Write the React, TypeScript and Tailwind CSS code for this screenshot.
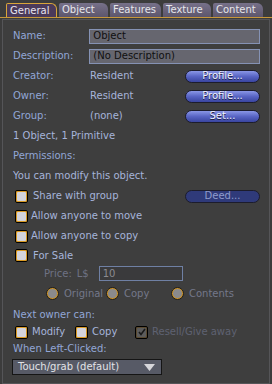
import React from "react";

const font = { fontFamily: '"DejaVu Sans", "Liberation Sans", sans-serif' };

function Tab({ label, active, w }: { label: string; active?: boolean; w: string }) {
  return (
    <div
      className={`${w} h-[14px] flex items-center pl-[3px] text-[10px] leading-none rounded-tr-[6px] rounded-tl-[2px] ${
        active
          ? "bg-[#4b3a5a] border-t border-l border-r border-[#d9a53a] text-[#e8e4ee]"
          : "bg-gradient-to-b from-[#77718a] to-[#5d566c] text-[#e6e6ea]"
      }`}
    >
      {label}
    </div>
  );
}

function Btn({ label, dark }: { label: string; dark?: boolean }) {
  return (
    <div
      className={`w-[75px] h-[13px] rounded-full border border-[#1c1c2c] flex items-center justify-center text-[10px] leading-none ${
        dark
          ? "bg-[#2f3a7a] text-[#8e9acc]"
          : "bg-gradient-to-b from-[#8a96e6] via-[#5864c4] to-[#3a45a0] text-[#eef0ff] [text-shadow:0_1px_0_#202040]"
      }`}
    >
      {label}
    </div>
  );
}

function Check({ checked, dim }: { checked?: boolean; dim?: boolean }) {
  return (
    <div
      className={`w-[13px] h-[13px] rounded-[2px] border border-black flex items-center justify-center shrink-0 ${
        dim ? "bg-[#5a4a30]" : "bg-[#d99a24]"
      }`}
    >
      <div
        className={`w-[9px] h-[9px] rounded-[1px] flex items-center justify-center ${
          dim ? "bg-[#5c5c5c]" : "bg-[#d4d4dc]"
        }`}
      >
        {checked && (
          <svg width="8" height="8" viewBox="0 0 8 8">
            <path d="M1 4 L3 6.5 L7 1" stroke="#1a1a1a" strokeWidth="1.6" fill="none" />
          </svg>
        )}
      </div>
    </div>
  );
}

function Radio() {
  return (
    <div className="w-[13px] h-[13px] rounded-full bg-[#c9922a] border border-[#1c1c1c] flex items-center justify-center shrink-0">
      <div className="w-[9px] h-[9px] rounded-full bg-[#8a8a8c]" />
    </div>
  );
}

const label = "text-[#92a6d6]";
const value = "text-[#a6b4da]";

export default function App() {
  return (
    <div className="w-[272px] h-[384px] bg-[#3c3c3c] flex flex-col text-[10px] leading-none" style={font}>
      {/* Tabs */}
      <div className="h-[18px] pt-[3px] pl-[6px] flex gap-[2px] border-b border-[#c8983a]">
        <Tab label="General" active w="w-[51px]" />
        <Tab label="Object" w="w-[49px]" />
        <Tab label="Features" w="w-[51px]" />
        <Tab label="Texture" w="w-[48px]" />
        <Tab label="Content" w="w-[50px]" />
      </div>

      {/* Panel */}
      <div className="flex-1 mx-[2px] mt-[1px] border border-[#555558] bg-[#3e3e3e] pl-[10px] pr-[9px] pt-[6px] flex flex-col">
        <div className="h-[20px] flex items-center">
          <span className={`w-[77px] ${label}`}>Name:</span>
          <div className="w-[172px] h-[15px] bg-[#66666f] border border-[#8592b4] px-[3px] flex items-center text-[#101010]">Object</div>
        </div>
        <div className="h-[20px] flex items-center">
          <span className={`w-[77px] ${label}`}>Description:</span>
          <div className="w-[172px] h-[15px] bg-[#66666f] border border-[#8592b4] px-[3px] flex items-center text-[#101010]">(No Description)</div>
        </div>
        <div className="h-[20px] flex items-center">
          <span className={`w-[77px] ${label}`}>Creator:</span>
          <span className={`flex-1 ${value}`}>Resident</span>
          <Btn label="Profile..." />
        </div>
        <div className="h-[20px] flex items-center">
          <span className={`w-[77px] ${label}`}>Owner:</span>
          <span className={`flex-1 ${value}`}>Resident</span>
          <Btn label="Profile..." />
        </div>
        <div className="h-[20px] flex items-center">
          <span className={`w-[77px] ${label}`}>Group:</span>
          <span className={`flex-1 ${value}`}>(none)</span>
          <Btn label="Set..." />
        </div>
        <div className={`h-[20px] flex items-center ${value}`}>1 Object, 1 Primitive</div>
        <div className={`h-[20px] flex items-center ${label}`}>Permissions:</div>
        <div className={`h-[20px] flex items-center ${value}`}>You can modify this object.</div>

        <div className="h-[20px] flex items-center pl-[2px]">
          <Check />
          <span className={`ml-[5px] flex-1 ${value}`}>Share with group</span>
          <Btn label="Deed..." dark />
        </div>
        <div className="h-[20px] flex items-center pl-[2px]">
          <Check />
          <span className={`ml-[3px] ${value}`}>Allow anyone to move</span>
        </div>
        <div className="h-[20px] flex items-center pl-[2px]">
          <Check />
          <span className={`ml-[3px] ${value}`}>Allow anyone to copy</span>
        </div>
        <div className="h-[19px] flex items-center pl-[2px]">
          <Check />
          <span className={`ml-[5px] ${value}`}>For Sale</span>
        </div>
        <div className="h-[17px] flex items-center pl-[31px] text-[#6e7284]">
          <span>Price:</span>
          <span className="ml-[5px]">L$</span>
          <div className="ml-[10px] w-[84px] h-[15px] border border-[#6f80a4] bg-[#3a3a3c] px-[3px] flex items-center text-[#8a8a90]">10</div>
        </div>
        <div className="h-[23px] flex items-center pl-[33px] text-[#74788a]">
          <Radio />
          <span className="ml-[5px] w-[42px]">Original</span>
          <Radio />
          <span className="ml-[5px] w-[47px]">Copy</span>
          <Radio />
          <span className="ml-[5px]">Contents</span>
        </div>
        <div className={`h-[20px] flex items-center ${label}`}>Next owner can:</div>
        <div className="h-[14px] flex items-center pl-[2px]">
          <Check />
          <span className={`ml-[4px] w-[43px] ${value}`}>Modify</span>
          <Check />
          <span className={`ml-[4px] w-[43px] ${value}`}>Copy</span>
          <Check checked dim />
          <span className="ml-[4px] text-[#5e6272]">Resell/Give away</span>
        </div>
        <div className={`h-[20px] flex items-center ${label}`}>When Left-Clicked:</div>
        <div className="h-[16px] w-[150px] -ml-px bg-[#575a66] border border-[#151515] flex items-center pl-[5px] pr-[6px] text-[#e2e2e6]">
          <span className="flex-1">Touch/grab (default)</span>
          <svg width="11" height="7" viewBox="0 0 11 7">
            <path d="M0 0 H11 L5.5 7 Z" fill="#d6d6da" />
          </svg>
        </div>
      </div>
    </div>
  );
}
